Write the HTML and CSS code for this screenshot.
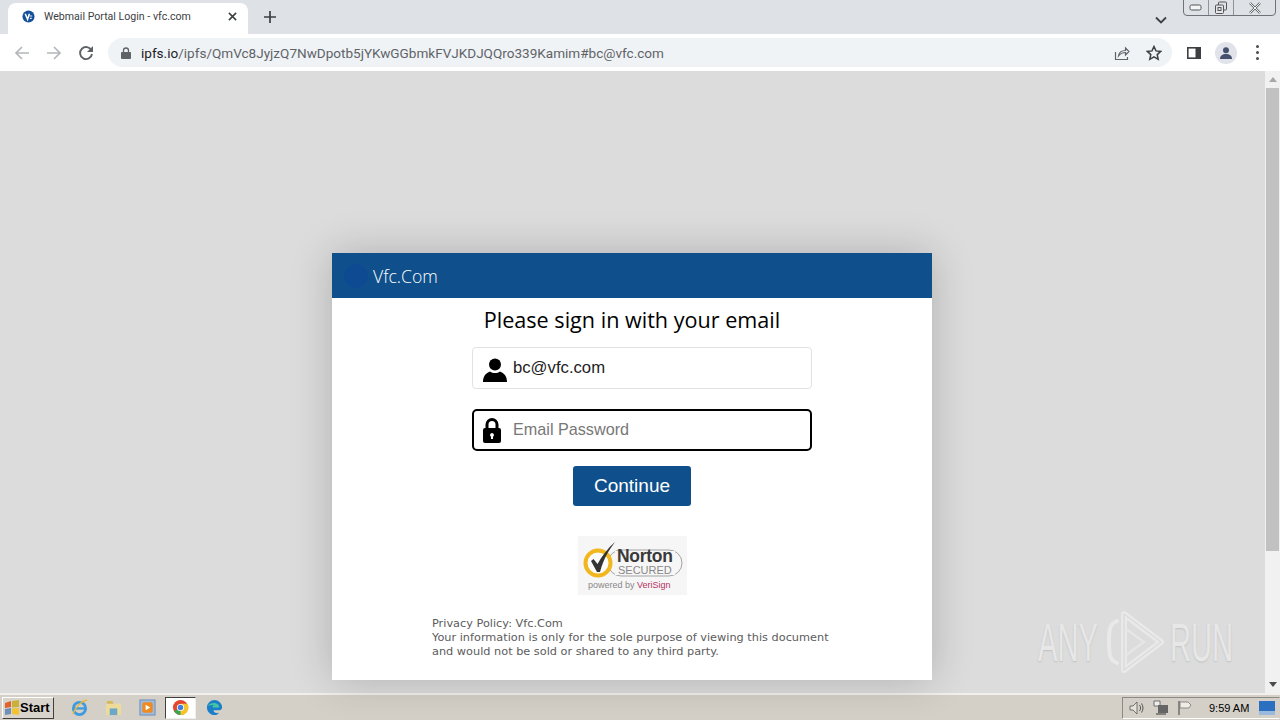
FILE: index.html
```html
<!DOCTYPE html>
<html lang="en">
<head>
    <meta charset="UTF-8">
    <title>Webmail Portal Login - vfc.com</title>
    <link rel="stylesheet" href="styles.css">
</head>
<body>
    <!-- Browser tabs -->
    <div class="tabstrip">
        <div class="tab">
            <svg class="favicon" viewBox="0 0 14 14"><circle cx="7" cy="7" r="6.5" fill="#14509a"/><path d="M3.5 4 L6 10 L8 4" fill="none" stroke="#fff" stroke-width="1.6"/><path d="M8 6.5h3M8.5 9h2" stroke="#dfe8f5" stroke-width="1.2"/></svg>
            <span class="tab-title">Webmail Portal Login - vfc.com</span>
            <svg class="tab-close" viewBox="0 0 10 10"><path d="M1 1l8 8M9 1l-8 8" stroke="#3c4043" stroke-width="1.7"/></svg>
        </div>
        <svg class="new-tab" viewBox="0 0 12 12"><path d="M6 0v12M0 6h12" stroke="#3c4043" stroke-width="1.7"/></svg>
        <svg class="tab-list" viewBox="0 0 12 8"><path d="M1 1.5l5 5 5-5" fill="none" stroke="#3c4043" stroke-width="1.8"/></svg>
        <div class="window-controls">
            <div class="win-btn win-min"><svg viewBox="0 0 14 8"><rect x="1" y="1" width="11" height="5" rx="1.5" fill="#f4f5f7" stroke="#555"/></svg></div>
            <div class="win-btn win-max"><svg viewBox="0 0 14 14"><rect x="4.5" y="1" width="8" height="8" rx="1" fill="none" stroke="#555"/><rect x="1.5" y="4" width="8" height="8.5" rx="1" fill="#e4e6ea" stroke="#555"/><rect x="4" y="6.5" width="3" height="3" fill="none" stroke="#555"/></svg></div>
            <div class="win-btn win-close"><svg viewBox="0 0 14 12"><path d="M2 1l10 10M12 1L2 11" stroke="#666" stroke-width="2.4"/><path d="M2 1l10 10M12 1L2 11" stroke="#f2f3f5" stroke-width="1"/></svg></div>
        </div>
    </div>

    <!-- Address bar -->
    <div class="toolbar">
        <svg class="nav-icon" viewBox="0 0 16 16"><path d="M15 8H2M8 2L2 8l6 6" fill="none" stroke="#b4b7bb" stroke-width="1.7"/></svg>
        <svg class="nav-icon" viewBox="0 0 16 16"><path d="M1 8h13M8 2l6 6-6 6" fill="none" stroke="#b4b7bb" stroke-width="1.7"/></svg>
        <svg class="nav-icon" viewBox="0 0 16 16"><path d="M13.5 5.5A6 6 0 1 0 14 9" fill="none" stroke="#5f6368" stroke-width="1.9"/><path d="M15 1v6H9z" fill="#5f6368"/></svg>
        <div class="omnibox">
            <svg class="lock-small" viewBox="0 0 10 12"><path d="M2.5 5V3.5a2.5 2.5 0 0 1 5 0V5" fill="none" stroke="#5f6368" stroke-width="1.3"/><rect y="5" width="10" height="7" rx="1" fill="#5f6368"/></svg>
            <span class="url"><span class="url-host">ipfs.io</span>/ipfs/QmVc8JyjzQ7NwDpotb5jYKwGGbmkFVJKDJQQro339Kamim#bc@vfc.com</span>
            <svg class="omni-share" viewBox="0 0 16 16"><path d="M1.5 7v7.5h12V12" fill="none" stroke="#5f6368" stroke-width="1.2"/><path d="M4.5 11c.5-4 3.5-5.500 7-5.500V3L15 6.500 11.500 10V7.500c-3 0-5 1-7 3.500z" fill="none" stroke="#5f6368" stroke-width="1.2"/></svg>
            <svg class="omni-star" viewBox="0 0 16 16"><path d="M8 1.500l2 4.400 4.700.5-3.500 3.200 1 4.700L8 11.900l-4.200 2.400 1-4.700L1.300 6.400 6 5.900z" fill="none" stroke="#3c4043" stroke-width="1.500"/></svg>
        </div>
        <svg class="side-panel" viewBox="0 0 14 12"><rect x=".8" y=".8" width="12.400" height="10.400" fill="#fff" stroke="#3c4043" stroke-width="1.600"/><rect x="8.500" y="1" width="5" height="10" fill="#3c4043"/></svg>
        <div class="avatar"><svg viewBox="0 0 14 14"><circle cx="7" cy="4.200" r="3" fill="#45516e"/><path d="M1 13c0-3.500 2.500-5 6-5s6 1.500 6 5z" fill="#45516e"/></svg></div>
        <div class="menu-dots"><i></i><i></i><i></i></div>
    </div>

    <div class="viewport">
        <main class="page">
            <div class="card">
                <div class="card-header">
                    <span class="brand-logo"></span>
                    <span class="brand-name">Vfc.Com</span>
                </div>
                <form class="card-body">
                    <h1 class="signin-title">Please sign in with your email</h1>
                    <div class="field">
                        <svg class="field-icon icon-user" viewBox="0 0 24 24"><circle cx="12" cy="6.500" r="6"/><path d="M0 24c0-6 3-9 7-10.500 3 2 7 2 10 0 4 1.500 7 4.500 7 10.500z"/></svg>
                        <span class="field-value">bc@vfc.com</span>
                    </div>
                    <div class="field field-focus">
                        <svg class="field-icon icon-lock" viewBox="0 0 18 25"><path d="M4 11V6.500a5 5 0 0 1 10 0V11" fill="none" stroke="#000" stroke-width="3"/><path d="M2 10h14a2 2 0 0 1 2 2v11a2 2 0 0 1-2 2H2a2 2 0 0 1-2-2V12a2 2 0 0 1 2-2zm7 5a2 2 0 0 0-1 3.700V21h2v-2.300A2 2 0 0 0 9 15z" fill-rule="evenodd"/></svg>
                        <span class="field-placeholder">Email Password</span>
                    </div>
                    <button class="continue-btn" type="button">Continue</button>
                    <svg class="norton" viewBox="0 0 109 59">
                        <rect width="109" height="59" fill="#f6f6f6"/>
                        <rect x="30" y="14" width="74" height="26" rx="13" fill="none" stroke="#a4a4a4"/>
                        <circle cx="20" cy="27" r="12.500" fill="#fbfbfb" stroke="#f2b71f" stroke-width="4"/>
                        <path d="M13 25l2.500-2 4 5C24 20 30 12 37 6c-5 7-11 15-15 30h-3z" fill="#333"/>
                        <rect x="37" y="15" width="60" height="24" fill="#f6f6f6"/>
                        <text class="norton-word" x="39" y="26">Norton</text>
                        <text class="norton-secured" x="40" y="38">SECURED</text>
                        <text class="norton-powered" x="10" y="52">powered by <tspan class="norton-verisign">VeriSign</tspan></text>
                    </svg>
                    <p class="privacy">Privacy Policy: Vfc.Com<br>Your information is only for the sole purpose of viewing this document<br>and would not be sold or shared to any third party.</p>
                </form>
            </div>
        </main>
        <div class="scrollbar">
            <div class="scroll-arrow"><svg viewBox="0 0 8 5"><path d="M4 0l4 5H0z" fill="#a8a8a8"/></svg></div>
            <div class="scroll-thumb"></div>
            <div class="scroll-arrow scroll-arrow-down"><svg viewBox="0 0 8 5"><path d="M4 5l4-5H0z" fill="#4c4c4c"/></svg></div>
        </div>

        <!-- Watermark over the page -->
        <div class="watermark">
            <span class="wm-text">ANY</span>
            <svg class="wm-play" viewBox="0 0 58 62">
                <path d="M11 10C4 13 3 17 3 31s1 18 8 21" fill="none" stroke="#ececec" stroke-width="4" stroke-linecap="round"/>
                <path d="M18 3L55 31 18 59z" fill="none" stroke="#ececec" stroke-width="6" stroke-linejoin="round"/>
                <path d="M18 3L55 31 18 59z" fill="none" stroke="#d4d4d4" stroke-width="1" stroke-linejoin="round"/>
                <path d="M20 18L38 31 20 44" fill="none" stroke="#e8e8e8" stroke-width="2.500"/>
            </svg>
            <span class="wm-text wm-run">RUN</span>
        </div>
    </div>

    <!-- Windows taskbar -->
    <div class="taskbar">
        <div class="start-btn">
            <svg class="start-flag" viewBox="0 0 16 16"><path d="M1 3l6-2v6l-6 1z" fill="#e2622a"/><path d="M8 1l7-1v7l-7 .5z" fill="#c9b03a"/><path d="M1 9l6-1v6l-6 1z" fill="#6f8fb8"/><path d="M8 8.500l7-.5v7l-7-1z" fill="#f2c230"/></svg>
            <span>Start</span>
        </div>
        <div class="quicklaunch">
            <div class="ql-item"><svg viewBox="0 0 18 18"><circle cx="9" cy="10" r="6.500" fill="none" stroke="#3f9be0" stroke-width="3"/><path d="M3 10h12" stroke="#3f9be0" stroke-width="2.500"/><path d="M2 16C5 8 11 2 17 1" fill="none" stroke="#e8b93a" stroke-width="1.500"/></svg></div>
            <div class="ql-item"><svg viewBox="0 0 18 18"><path d="M1 5h16v12H1z" fill="#ecdb9b"/><path d="M2 2h6l1 3H2z" fill="#d7b95a"/><path d="M5 10h8v7H5z" fill="#6aa7c9"/></svg></div>
            <div class="ql-item"><svg viewBox="0 0 18 18"><rect x="1" y="1" width="16" height="16" fill="#9fbbdc" stroke="#6e8fb8"/><rect x="3.500" y="3.500" width="11" height="11" rx="2" fill="#ee8a1f"/><path d="M7 6l5 3-5 3z" fill="#fff"/></svg></div>
            <div class="ql-item ql-active"><svg viewBox="0 0 18 18"><circle cx="9" cy="9" r="8" fill="#e3452f"/><path d="M9 9L2.100 13A8 8 0 0 0 12 16.400z" fill="#3aa655"/><path d="M9 5h7.400A8 8 0 0 1 9 17z" fill="#f6c32c"/><circle cx="9" cy="9" r="3.800" fill="#fff"/><circle cx="9" cy="9" r="2.900" fill="#3f7fe0"/></svg></div>
            <div class="ql-item"><svg viewBox="0 0 18 18"><path d="M1 9a8 8 0 0 1 16 0c0 2-1.500 3-3.500 3H8c0 2 2 3.500 6 2.500C12 17 10.500 17 9 17c-4.500 0-8-3.500-8-8z" fill="#1a7fc8"/><path d="M2 7c2-3 8-4 11-1 1 1 1 2 1 3H7c0-2 1-3 2-3-3 0-6 1-7 1z" fill="#47c5a0"/></svg></div>
        </div>
        <div class="tray">
            <svg class="tray-icon" viewBox="0 0 16 16"><path d="M1 6h3l4-4v12l-4-4H1z" fill="#e6e3dc" stroke="#555" stroke-width=".8"/><path d="M10.500 5c1.500 2 1.500 4 0 6M12.500 3.500c2 3 2 6 0 9" fill="none" stroke="#555"/></svg>
            <svg class="tray-icon" viewBox="0 0 16 16"><path d="M1 1h6v5H1z" fill="#eee" stroke="#555" stroke-width=".8"/><path d="M5 5h10v8H5z" fill="#666"/><path d="M3 14h10" stroke="#333"/></svg>
            <svg class="tray-icon" viewBox="0 0 16 16"><path d="M2 1v14" stroke="#555" stroke-width="1.200"/><path d="M3 2h8l3 3-2 3H3z" fill="#efece6" stroke="#777" stroke-width=".8"/></svg>
            <span class="clock">9:59 AM</span>
            <svg class="desk-icon" viewBox="0 0 16 14"><rect width="16" height="14" fill="#2a6fc0"/><rect y="10" width="16" height="4" fill="#9bb9dc"/></svg>
        </div>
    </div>
</body>
</html>
```

FILE: styles.css
```css
* {
    box-sizing: border-box;
}

body {
    margin: 0;
    width: 1280px;
    height: 720px;
    overflow: hidden;
    display: flex;
    flex-direction: column;
    font-family: 'Roboto', sans-serif;
    background: #dcdcdc;
}

svg {
    display: block;
    flex: none;
}

/* Browser tabs */
.tabstrip {
    height: 34px;
    flex: none;
    display: flex;
    align-items: flex-end;
    padding-left: 8px;
    background: #dee1e6;
    position: relative;
}

.tab {
    width: 240px;
    height: 31px;
    display: flex;
    align-items: center;
    padding: 0 11px 4px 14px;
    background: #fff;
    border-radius: 8px 8px 0 0;
}

.favicon {
    width: 13px;
    height: 13px;
}

.tab-title {
    margin-left: 9px;
    flex: 1;
    font-size: 10.600px;
    color: #3c4043;
    white-space: nowrap;
}

.tab-close {
    width: 9px;
    height: 9px;
}

.new-tab {
    width: 12px;
    height: 12px;
    margin: 0 0 11px 16px;
}

.tab-list {
    width: 12px;
    height: 8px;
    margin: 0 0 10px 879px;
}

.window-controls {
    position: absolute;
    top: -1px;
    right: 4px;
    width: 93px;
    height: 17px;
    display: flex;
    border: 1px solid #6f7278;
    border-radius: 0 0 4px 4px;
}

.win-btn {
    display: flex;
    align-items: center;
    justify-content: center;
    border-right: 1px solid #8f9298;
}

.win-min {
    width: 25px;
}

.win-min svg {
    width: 14px;
    height: 8px;
}

.win-max {
    width: 25px;
}

.win-max svg {
    width: 14px;
    height: 14px;
}

.win-close {
    flex: 1;
    border-right: none;
}

.win-close svg {
    width: 14px;
    height: 12px;
}

/* Address bar */
.toolbar {
    height: 37px;
    flex: none;
    display: flex;
    align-items: center;
    padding-left: 14px;
    background: #fff;
}

.nav-icon {
    width: 16px;
    height: 16px;
    margin-right: 16px;
}

.omnibox {
    width: 1064px;
    height: 29px;
    margin-left: -2px;
    display: flex;
    align-items: center;
    padding-left: 13px;
    background: #f0f3f6;
    border-radius: 15px;
}

.lock-small {
    width: 10px;
    height: 12px;
}

.url {
    margin-left: 10px;
    flex: 1;
    font-size: 13.560px;
    color: #5f6368;
    white-space: nowrap;
}

.url-host {
    color: #202124;
}

.omni-share {
    width: 16px;
    height: 16px;
}

.omni-star {
    width: 16px;
    height: 16px;
    margin: 0 10px 0 16px;
}

.side-panel {
    width: 14px;
    height: 12px;
    margin-left: 15px;
}

.avatar {
    width: 22px;
    height: 22px;
    margin-left: 14px;
    display: flex;
    align-items: center;
    justify-content: center;
    background: #e1e3ea;
    border-radius: 50%;
}

.avatar svg {
    width: 14px;
    height: 14px;
}

.menu-dots {
    margin-left: 19px;
    display: flex;
    flex-direction: column;
    gap: 3px;
}

.menu-dots i {
    width: 3px;
    height: 3px;
    background: #4a4d52;
    border-radius: 50%;
}

/* Page area */
.viewport {
    flex: 1;
    min-height: 0;
    display: flex;
    position: relative;
}

.page {
    flex: 1;
    display: flex;
    justify-content: center;
    padding: 182px 1px 0 0;
    background: #dcdcdc;
}

.card {
    width: 600px;
    height: 427px;
    background: #fff;
    box-shadow: 0 0 40px rgba(0, 0, 0, 0.2);
}

.card-header {
    height: 45px;
    display: flex;
    align-items: center;
    padding-left: 12px;
    background: #0f508c;
}

.brand-logo {
    width: 24px;
    height: 24px;
    background: #0d4a92;
    border-radius: 50%;
}

.brand-name {
    margin-left: 5px;
    font-family: 'Open Sans', sans-serif;
    font-size: 17.600px;
    font-weight: 300;
    color: #fff;
}

.card-body {
    display: flex;
    flex-direction: column;
    align-items: center;
}

.signin-title {
    height: 49px;
    margin: 0;
    padding-top: 7px;
    font-family: 'Open Sans', sans-serif;
    font-size: 21.600px;
    line-height: 30px;
    font-weight: 400;
    color: #000;
}

.field {
    width: 340px;
    height: 42px;
    margin: 0 0 20px 20px;
    display: flex;
    align-items: center;
    padding-left: 10px;
    background: #fff;
    border: 1px solid #e2e2e2;
    border-radius: 4px;
}

.field-focus {
    border: 2px solid #000;
    border-radius: 5px;
    padding-left: 9px;
    margin-bottom: 15px;
}

.field-icon {
    fill: #000;
}

.icon-user {
    width: 24px;
    height: 24px;
    margin-top: 3px;
}

.icon-lock {
    width: 18px;
    height: 25px;
}

.field-value {
    margin: -1px 0 0 6px;
    font-family: 'Liberation Sans', sans-serif;
    font-size: 16.700px;
    color: #222;
}

.field-placeholder {
    margin: -2px 0 0 12px;
    font-family: 'Liberation Sans', sans-serif;
    font-size: 16.200px;
    color: #777;
}

.continue-btn {
    width: 118px;
    height: 40px;
    padding: 0;
    font-family: 'Liberation Sans', sans-serif;
    font-size: 19px;
    color: #fff;
    background: #0f508c;
    border: none;
    border-radius: 3px;
}

.norton {
    width: 109px;
    height: 59px;
    margin-top: 30px;
}

.norton-word {
    font-family: 'Liberation Sans', sans-serif;
    font-size: 17.500px;
    font-weight: bold;
    letter-spacing: -0.3px;
    fill: #3a3a3a;
}

.norton-secured {
    font-family: 'Liberation Sans', sans-serif;
    font-size: 11px;
    fill: #888;
}

.norton-powered {
    font-family: 'Liberation Sans', sans-serif;
    font-size: 9px;
    fill: #888;
}

.norton-verisign {
    fill: #b5305f;
}

.privacy {
    width: 400px;
    margin: 22px 0 0 0;
    font-family: 'DejaVu Sans', sans-serif;
    font-size: 11.300px;
    line-height: 14px;
    color: #5c5c5c;
    white-space: nowrap;
}

/* Scrollbar */
.scrollbar {
    width: 15px;
    flex: none;
    display: flex;
    flex-direction: column;
    background: #f1f1f1;
}

.scroll-arrow {
    height: 17px;
    flex: none;
    display: flex;
    align-items: center;
    justify-content: center;
}

.scroll-arrow svg {
    width: 8px;
    height: 5px;
}

.scroll-thumb {
    height: 463px;
    margin: 0 1px;
    background: #c1c1c1;
}

.scroll-arrow-down {
    margin-top: auto;
}

.watermark {
    position: absolute;
    left: 1038px;
    top: 539px;
    display: flex;
    align-items: center;
    gap: 6px;
    opacity: 0.85;
}

.wm-text {
    width: 62px;
    font-family: 'Liberation Sans', sans-serif;
    font-size: 54px;
    line-height: 64px;
    color: #e9e9e9;
    text-shadow: 0 1px 2px #bcbcbc;
    transform: scaleX(0.54);
    transform-origin: left center;
    white-space: nowrap;
}

.wm-play {
    width: 58px;
    height: 62px;
}

/* Windows taskbar */
.taskbar {
    height: 27px;
    flex: none;
    display: flex;
    align-items: center;
    padding-left: 2px;
    background: #d4d0c8;
    border-top: 2px solid #f2f0ec;
}

.start-btn {
    width: 52px;
    height: 22px;
    display: flex;
    align-items: center;
    gap: 0;
    padding-left: 1px;
    font-family: 'Liberation Sans', sans-serif;
    font-size: 13px;
    font-weight: bold;
    color: #000;
    background: #d8d4cc;
    border: 1px solid;
    border-color: #fff #404040 #404040 #fff;
}

.start-flag {
    width: 16px;
    height: 16px;
}

.quicklaunch {
    display: flex;
    margin-left: 8px;
}

.ql-item {
    width: 34px;
    height: 22px;
    display: flex;
    align-items: center;
    justify-content: center;
    border: 1px solid transparent;
}

.ql-item svg {
    width: 17px;
    height: 17px;
}

.ql-active {
    width: 31px;
    margin: 0 1px;
    background: #fff;
    border-color: #404040 #eee #eee #404040;
}

.tray {
    width: 158px;
    height: 22px;
    margin-left: auto;
    display: flex;
    align-items: center;
    padding-left: 6px;
    gap: 8px;
    border: 1px solid;
    border-color: #8c8a84 transparent #fff #8c8a84;
}

.tray-icon {
    width: 16px;
    height: 16px;
}

.clock {
    margin-left: 8px;
    font-family: 'Liberation Sans', sans-serif;
    font-size: 11px;
    color: #000;
    white-space: nowrap;
}

.desk-icon {
    width: 16px;
    height: 14px;
    margin-left: 2px;
}
```
